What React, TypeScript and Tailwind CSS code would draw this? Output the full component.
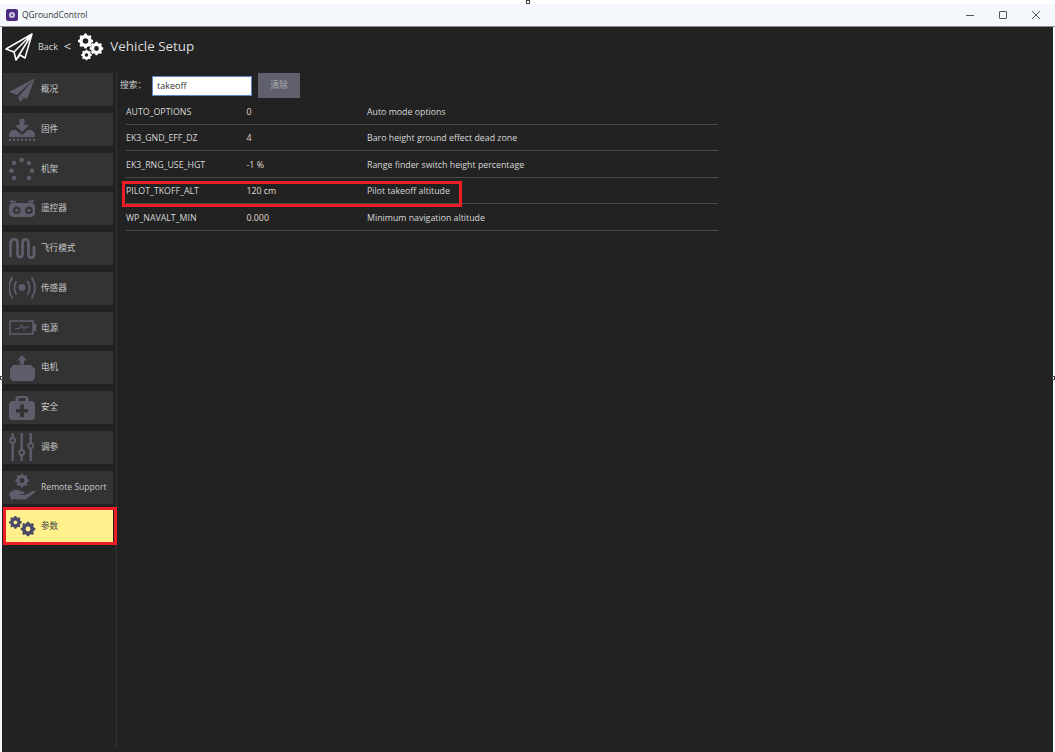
import type { ReactNode } from "react";

const uiFont = "font-['Open_Sans','Noto_Sans_CJK_SC',sans-serif]";

// builds a cog outline with a round hole, cx/cy in svg units
function gearPath(cx: number, cy: number, r: number, teeth: number, hole: number) {
  const pts: string[] = [];
  const step = (Math.PI * 2) / teeth;
  for (let i = 0; i < teeth; i++) {
    const a = i * step;
    const offs: [number, number][] = [
      [-0.32, r * 0.82],
      [-0.17, r],
      [0.17, r],
      [0.32, r * 0.82],
    ];
    for (const [o, rad] of offs) {
      const t = a + o * step;
      pts.push(`${(cx + Math.cos(t) * rad).toFixed(2)} ${(cy + Math.sin(t) * rad).toFixed(2)}`);
    }
  }
  const ring = `M${cx - hole} ${cy}a${hole} ${hole} 0 1 0 ${hole * 2} 0a${hole} ${hole} 0 1 0 ${-hole * 2} 0Z`;
  return `M${pts.join("L")}Z${ring}`;
}

function Gears({ className }: { className: string }) {
  return (
    <svg viewBox="0 0 28 28" className={className} fill="currentColor" fillRule="evenodd">
      <path d={gearPath(9.5, 8, 7.6, 8, 2.8)} />
      <path d={gearPath(20.5, 15.5, 6.8, 8, 2.4)} />
      <path d={gearPath(10.5, 22, 5.4, 8, 1.8)} />
    </svg>
  );
}

function TwoGears({ className }: { className: string }) {
  return (
    <svg viewBox="0 0 28 28" className={className} fill="currentColor" fillRule="evenodd">
      <path d={gearPath(6.4, 9.3, 6.4, 8, 1.9)} />
      <path d={gearPath(19, 16, 7.4, 8, 2.4)} />
    </svg>
  );
}

const icon = "h-[28px] w-[28px] shrink-0 text-[#5d5d6b]";

const items: { label: string; icon: ReactNode }[] = [
  {
    label: "概况",
    icon: (
      <svg viewBox="0 0 28 28" className={icon} fill="currentColor">
        <path d="M26 2 0 16l8 3L26 2ZM26 2 10 20l8 3L26 2ZM9 20l2 6 4-4-6-2Z" />
      </svg>
    ),
  },
  {
    label: "固件",
    icon: (
      <svg viewBox="0 0 28 28" className={icon} fill="currentColor">
        <path d="M10.500 4h5v6h4.500l-7 7-7-7h4.500V4Z" />
        <path d="M0 20c0-2 1-4 4-5h3l6 5 6-5h3c3 1 4 3 4 5v2H0v-2Z" />
        <path d="M0 23.500h2V26H0zM4 23.500h2V26H4zM8 23.500h2V26H8zM12 23.500h2V26h-2zM16 23.500h2V26h-2zM20 23.500h2V26h-2zM24 23.500h2V26h-2z" />
      </svg>
    ),
  },
  {
    label: "机架",
    icon: (
      <svg viewBox="0 0 28 28" className={icon} fill="currentColor">
        <circle cx="12.700" cy="5" r="2.300" />
        <circle cx="20" cy="8" r="2.300" />
        <circle cx="23" cy="15.700" r="2.300" />
        <circle cx="20" cy="23" r="2.300" />
        <circle cx="5" cy="23" r="2.300" />
        <circle cx="2.400" cy="15.700" r="2.300" />
        <circle cx="5" cy="8" r="2.300" />
      </svg>
    ),
  },
  {
    label: "遥控器",
    icon: (
      <svg viewBox="0 0 28 28" className={icon} fill="currentColor" fillRule="evenodd">
        <path d="M1 5l6 1v1.500H1zM25 5l-6 1v1.500h6z" />
        <path d="M4 8h18c2 0 4 2 4 4v6c0 2-2 4-4 4H4c-2 0-4-2-4-4v-6c0-2 2-4 4-4ZM7.700 11.500a3.800 3.800 0 1 0 0 7.600 3.800 3.800 0 0 0 0-7.600Zm12.300 0a3.800 3.800 0 1 0 0 7.600 3.800 3.800 0 0 0 0-7.600Z" />
        <circle cx="7.700" cy="15.300" r="1.600" />
        <circle cx="20" cy="15.300" r="1.600" />
      </svg>
    ),
  },
  {
    label: "飞行模式",
    icon: (
      <svg viewBox="0 0 28 28" className={icon} fill="none" stroke="currentColor" strokeWidth="2.800">
        <path d="M1.500 22V9c0-6.500 7-6.500 7 0v9c0 5.500 5 5.500 5 0V9c0-6.500 6-6.500 6 0v10c0 5 5.500 5 5.500 0v-8" />
      </svg>
    ),
  },
  {
    label: "传感器",
    icon: (
      <svg viewBox="0 0 28 28" className={icon} fill="none" stroke="currentColor" strokeWidth="1.800">
        <circle cx="13" cy="13.500" r="3.400" fill="currentColor" stroke="none" />
        <path d="M7.500 7c-2.800 4.500-2.800 9 0 13.500M18.500 7c2.800 4.500 2.800 9 0 13.500" />
        <path d="M3.500 3c-4.500 7-4.500 14.500 0 21.500M22.500 3c4.500 7 4.500 14.500 0 21.500" />
      </svg>
    ),
  },
  {
    label: "电源",
    icon: (
      <svg viewBox="0 0 28 28" className={icon} fill="none" stroke="currentColor" strokeWidth="1.600">
        <rect x="1" y="7" width="23" height="13" />
        <path d="M25 10.500h1.500v6H25z" fill="currentColor" />
        <path d="M6 14.500h4l3-3 2 3 2-1.500h3" strokeWidth="1.200" />
      </svg>
    ),
  },
  {
    label: "电机",
    icon: (
      <svg viewBox="0 0 28 28" className={icon} fill="currentColor">
        <path d="M13 1l5 5.500h-3v4h-4v-4H8L13 1Z" />
        <path d="M4 11h18l4 4v9l-2 3H3l-2-3v-9l3-4Z" />
      </svg>
    ),
  },
  {
    label: "安全",
    icon: (
      <svg viewBox="0 0 28 28" className={icon} fill="currentColor" fillRule="evenodd">
        <path d="M8.500 2h9l2 2v3h3.500c1.500 0 3 1.500 3 3v13c0 1.500-1.500 3-3 3H3c-1.500 0-3-1.500-3-3V10c0-1.500 1.500-3 3-3h3.500V4l2-2Zm1 2v3h7V4h-7Zm1.500 6.500v4.500H7v3.500h4V23h4v-4.500h4V15h-4v-4.500h-4Z" />
      </svg>
    ),
  },
  {
    label: "调参",
    icon: (
      <svg viewBox="0 0 28 28" className={icon} fill="none" stroke="currentColor" strokeWidth="1.800">
        <path d="M3.700 0v5M3.700 10v18M12.700 0v17M12.700 22v6M21.700 0v10M21.700 15.500V28" strokeWidth="2.400" />
        <circle cx="3.700" cy="7.500" r="2.500" />
        <circle cx="12.700" cy="19.500" r="2.500" />
        <circle cx="21.700" cy="12.800" r="2.500" />
      </svg>
    ),
  },
  {
    label: "Remote Support",
    icon: (
      <svg viewBox="0 0 28 28" className={icon} fill="currentColor" fillRule="evenodd">
        <path d={gearPath(13, 7.500, 6.800, 8, 2.400)} />
        <path d="M0 20.500c3-3 6-4.500 9-3.500l5 1.500c2 .5 2 2.500 0 2.500h-3v1h5l8.500-4.500c1.500-.5 2.500 1 1.500 2L16.500 26.500H8l-3-.8-2.500 1.800L0 20.500Z" />
      </svg>
    ),
  },
];

const params = [
  { name: "AUTO_OPTIONS", value: "0", desc: "Auto mode options" },
  { name: "EK3_GND_EFF_DZ", value: "4", desc: "Baro height ground effect dead zone" },
  { name: "EK3_RNG_USE_HGT", value: "-1 %", desc: "Range finder switch height percentage" },
  { name: "PILOT_TKOFF_ALT", value: "120 cm", desc: "Pilot takeoff altitude", marked: true },
  { name: "WP_NAVALT_MIN", value: "0.000", desc: "Minimum navigation altitude" },
];

function NavButton({ label, children }: { label: string; children: ReactNode }) {
  return (
    <div className="flex h-[33px] w-[110px] items-center gap-[4px] bg-[#333333] pl-[6px] text-[8.600px] text-[#c8c8c8]">
      {children}
      <span className="whitespace-nowrap">{label}</span>
    </div>
  );
}

export default function App() {
  return (
    <div className={`relative flex h-[752px] w-[1055px] flex-col overflow-hidden bg-[#f4f7fb] ${uiFont}`}>
      {/* selection handles left on the captured window */}
      <div className="absolute top-0 left-[526px] h-[4px] w-[4px] border border-[#444444] bg-white" />
      <div className="absolute top-[376px] left-0 h-[4px] w-[3px] border border-[#444444] bg-white" />
      <div className="absolute top-[376px] right-0 h-[4px] w-[3px] border border-[#444444] bg-white" />

      <div className="h-[4px] bg-white" />
      <div className="flex h-[23px] items-center justify-between border-b border-[#8a8d92] pl-[6px]">
        <div className="flex items-center gap-[4px]">
          <div className="flex h-[12px] w-[12px] items-center justify-center rounded-[2px] bg-[#4b2a80]">
            <div className="h-[6px] w-[6px] rounded-full border-2 border-[#c9c3e4]" />
          </div>
          <span className="text-[8.400px] text-[#333333]">QGroundControl</span>
        </div>
        <div className="flex items-center text-[#444444]">
          <div className="flex w-[33px] justify-center">
            <div className="h-px w-[8px] bg-[#555555]" />
          </div>
          <div className="flex w-[33px] justify-center">
            <div className="h-[8px] w-[8px] rounded-[1px] border border-[#555555]" />
          </div>
          <div className="flex w-[36px] justify-center pr-[3px]">
            <svg viewBox="0 0 8 8" className="h-[8px] w-[8px]" stroke="currentColor" strokeWidth="0.900">
              <path d="M0 0l8 8M8 0 0 8" />
            </svg>
          </div>
        </div>
      </div>

      <div className="mr-[2px] ml-[2px] flex min-h-0 flex-1 flex-col bg-[#222222]">
        <header className="flex h-[46px] items-center pb-[7px] pl-[3px] text-[#dcdcdc]">
          <svg viewBox="0 0 28 28" className="h-[28px] w-[28px]" fill="none" stroke="#ffffff" strokeWidth="1.500" strokeLinejoin="round">
            <path d="M27 1 1 16l8 3 2 8 4-5 5 3 7-24ZM27 1 9 19M27 1 11 27" />
          </svg>
          <span className="ml-[5px] text-[9px]">Back</span>
          <span className="ml-[6px] text-[13px] leading-none">&lt;</span>
          <Gears className="ml-[5px] h-[28px] w-[28px] text-white" />
          <span className="ml-[6px] text-[13.400px]">Vehicle Setup</span>
        </header>

        <div className="flex min-h-0 flex-1 pb-[3px]">
          <nav className="flex w-[114px] flex-col gap-[6.750px] pl-[1px]">
            {items.map((item) => (
              <NavButton key={item.label} label={item.label}>
                {item.icon}
              </NavButton>
            ))}
            <div className="relative flex h-[33px] w-[110px] items-center gap-[4px] bg-[#fff08c] pl-[6px] text-[8.600px] text-[#4a4a4a]">
              <TwoGears className="h-[28px] w-[28px] shrink-0 text-[#4b4b68]" />
              <span>参数</span>
              <div className="absolute -top-[3px] -right-[4px] -bottom-[2px] left-0 border-[3px] border-[#ee1c25]" />
            </div>
          </nav>

          <div className="w-px bg-[#333333]" />

          <main className="w-[601px] pl-[3px] text-[8.800px] text-[#d8d8d8]">
            <div className="flex h-[25px] items-center">
              <span className="w-[32px] text-[#cccccc]">搜索：</span>
              <div className="flex h-[20px] w-[100px] items-center border border-[#5b86c0] bg-white pl-[4px] text-[9px] text-[#333333]">
                takeoff
              </div>
              <div className="ml-[6px] flex h-[25px] w-[42px] items-center justify-center bg-[#5f5f6e] text-[#b4b4b4]">
                清除
              </div>
            </div>
            <div className="ml-[6px]">
              {params.map((row) => (
                <div key={row.name} className="relative flex h-[26.500px] items-center border-b border-[#4a4a4a] pt-[3px]">
                  <span className="w-[120.500px]">{row.name}</span>
                  <span className="w-[120.500px] text-[#e2dccf]">{row.value}</span>
                  <span>{row.desc}</span>
                  {row.marked && (
                    <div className="absolute top-[3.500px] left-[-4px] h-[26px] w-[340px] border-[3px] border-[#ee1c25]" />
                  )}
                </div>
              ))}
            </div>
          </main>
        </div>
      </div>
    </div>
  );
}
